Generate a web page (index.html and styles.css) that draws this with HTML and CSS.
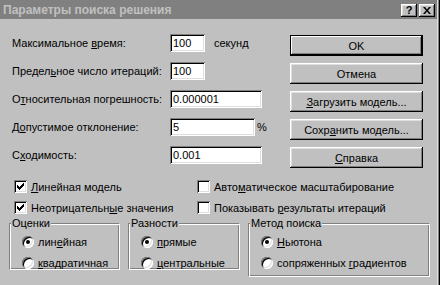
FILE: index.html
```html
<!DOCTYPE html>
<html lang="ru">
<head>
<meta charset="utf-8">
<title>Параметры поиска решения</title>
<link rel="stylesheet" href="styles.css">
</head>
<body>
<div class="window">
  <div class="titlebar">
    <span class="title">Параметры поиска решения</span>
    <div class="caption-btns">
      <span class="cbtn cbtn-help">?</span>
      <span class="cbtn">
        <svg width="8" height="7" viewBox="0 0 8 7"><path d="M0 0h2l2 2.5 2-2.5h2L5 3.5 8 7H6L4 4.5 2 7H0l3-3.5z" fill="#000"/></svg>
      </span>
    </div>
  </div>

  <div class="main">
    <div class="form">
      <span class="label">Максимальное <u>в</u>ремя:</span>
      <span class="field"><input class="input w-short" value="100"><span class="unit">секунд</span></span>

      <span class="label">Предел<u>ь</u>ное число итераций:</span>
      <span class="field"><input class="input w-short" value="100"></span>

      <span class="label">О<u>т</u>носительная погрешность:</span>
      <span class="field"><input class="input w-long" value="0.000001"></span>

      <span class="label">Д<u>о</u>пустимое отклонение:</span>
      <span class="field"><input class="input w-mid" value="5"><span class="unit-pct">%</span></span>

      <span class="label">С<u>х</u>одимость:</span>
      <span class="field"><input class="input w-long" value="0.001"></span>
    </div>

    <div class="buttons">
      <button class="btn btn-default">OK</button>
      <button class="btn">Отмена</button>
      <button class="btn"><u>З</u>агрузить модель...</button>
      <button class="btn">Сохр<u>а</u>нить модель...</button>
      <button class="btn"><u>С</u>правка</button>
    </div>
  </div>

  <div class="options">
    <label class="check"><span class="box"><svg width="7" height="7" viewBox="0 0 7 7"><path d="M0 2h1v1h1v1h1V3h1V2h1V1h1V0h1v3H6v1H5v1H4v1H3v1H2V6H1V5H0z" fill="#000"/></svg></span><span><u>Л</u>инейная модель</span></label>
    <label class="check"><span class="box"></span><span>Авто<u>м</u>атическое масштабирование</span></label>
    <label class="check"><span class="box"><svg width="7" height="7" viewBox="0 0 7 7"><path d="M0 2h1v1h1v1h1V3h1V2h1V1h1V0h1v3H6v1H5v1H4v1H3v1H2V6H1V5H0z" fill="#000"/></svg></span><span>Неотрицательн<u>ы</u>е значения</span></label>
    <label class="check"><span class="box"></span><span>Показывать <u>р</u>езультаты итераций</span></label>
  </div>

  <div class="groups">
    <fieldset class="group group-est">
      <legend>Оценки</legend>
      <div class="radios">
        <span class="radio-row"><span class="radio on"></span><span>лин<u>е</u>йная</span></span>
        <span class="radio-row"><span class="radio"></span><span><u>к</u>вадратичная</span></span>
      </div>
    </fieldset>
    <fieldset class="group group-diff">
      <legend>Разности</legend>
      <div class="radios">
        <span class="radio-row"><span class="radio on"></span><span><u>п</u>рямые</span></span>
        <span class="radio-row"><span class="radio"></span><span><u>ц</u>ентральные</span></span>
      </div>
    </fieldset>
    <fieldset class="group group-method">
      <legend>Метод поиска</legend>
      <div class="radios">
        <span class="radio-row"><span class="radio on"></span><span><u>Н</u>ьютона</span></span>
        <span class="radio-row"><span class="radio"></span><span>сопряженных <u>г</u>радиентов</span></span>
      </div>
    </fieldset>
  </div>
</div>
</body>
</html>
```
FILE: styles.css
```css
* { box-sizing: border-box; }
html, body { margin: 0; padding: 0; }
body {
  width: 440px;
  height: 285px;
  overflow: hidden;
  background: #c0c0c0;
  font-family: "Liberation Sans", Arial, sans-serif;
  font-size: 11px;
  color: #000;
}
u { text-decoration: underline; text-underline-offset: 1px; }

.window {
  width: 440px;
  height: 285px;
  padding-right: 3px;
  background: #c0c0c0;
  box-shadow: inset -1px 0 #000, inset -2px 0 #808080, inset -3px 0 #dfdfdf;
}

.titlebar {
  height: 19px;
  background: #808080;
  display: flex;
  align-items: center;
  justify-content: space-between;
  padding: 0 2px 0 3px;
}
.title {
  color: #c0c0c0;
  font-weight: bold;
  font-size: 12px;
  white-space: nowrap;
}
.caption-btns {
  display: flex;
  gap: 2px;
  align-self: flex-start;
  margin-top: 4px;
}
.cbtn {
  width: 16px;
  height: 13px;
  background: #c0c0c0;
  box-shadow: inset -1px -1px #000, inset 1px 1px #fff, inset -2px -2px #808080, inset 2px 2px #dfdfdf;
  display: flex;
  align-items: center;
  justify-content: center;
  font-weight: bold;
  font-size: 11px;
  line-height: 1;
}

.main {
  display: flex;
  padding: 15px 0 0 12px;
}
.form {
  width: 278px;
  display: grid;
  grid-template-columns: 158px auto;
  grid-auto-rows: 28px;
  align-items: start;
}
.label {
  line-height: 18px;
  white-space: nowrap;
}
.field {
  display: flex;
  align-items: center;
  height: 18px;
}
.input {
  height: 18px;
  margin: 0;
  border: none;
  outline: none;
  padding: 0 1px 0 3px;
  font: inherit;
  color: #000;
  background: #fff;
  box-shadow: inset 1px 1px #808080, inset -1px -1px #fff, inset 2px 2px #000, inset -2px -2px #dfdfdf;
}
.w-short { width: 35px; }
.w-mid { width: 85px; }
.w-long { width: 92px; }
.unit { margin-left: 9px; }
.unit-pct { margin-left: 2px; }

.buttons {
  display: flex;
  flex-direction: column;
  gap: 7px;
  margin-top: 1px;
  width: 133px;
}
.btn {
  height: 21px;
  margin: 0;
  padding: 0;
  border: none;
  font: inherit;
  color: #000;
  background: #c0c0c0;
  box-shadow: inset -1px -1px #000, inset 1px 1px #fff, inset -2px -2px #808080, inset 2px 2px #dfdfdf;
}
.btn-default {
  box-shadow: inset 0 0 0 1px #000, inset -2px -2px #000, inset 2px 2px #fff, inset -3px -3px #808080;
}

.options {
  display: grid;
  grid-template-columns: 183px auto;
  row-gap: 8px;
  padding: 6px 0 0 14px;
}
.check {
  display: flex;
  align-items: center;
  gap: 4px;
  height: 13px;
  white-space: nowrap;
}
.box {
  flex: none;
  width: 13px;
  height: 13px;
  background: #fff;
  box-shadow: inset 1px 1px #808080, inset -1px -1px #fff, inset 2px 2px #000, inset -2px -2px #dfdfdf;
  display: flex;
  align-items: center;
  justify-content: center;
}

.groups {
  display: flex;
  align-items: flex-start;
  gap: 8px;
  padding-left: 9px;
  margin-top: 3px;
}
.group {
  margin: 0;
  padding: 0;
  min-width: 0;
  border: 1px solid;
  border-color: #808080 #fff #fff #808080;
  box-shadow: inset 1px 1px #fff, inset -1px -1px #808080;
}
.group legend {
  margin-left: 1px;
  padding: 0 1px;
  line-height: 13px;
  background: #c0c0c0;
}
.group-est { width: 111px; height: 53px; }
.group-diff { width: 112px; height: 53px; }
.group-method { width: 182px; height: 60px; }

.radios {
  display: flex;
  flex-direction: column;
  gap: 9px;
  padding: 6px 0 0 12px;
}
.radio-row {
  display: flex;
  align-items: center;
  gap: 4px;
  height: 12px;
  white-space: nowrap;
}
.radio {
  flex: none;
  width: 12px;
  height: 12px;
  border-radius: 50%;
  background: #fff;
  box-shadow: inset 1px 1px #808080, inset -1px -1px #fff, inset 2px 2px #000, inset -2px -2px #dfdfdf;
  display: flex;
  align-items: center;
  justify-content: center;
}
.radio.on::after {
  content: "";
  width: 4px;
  height: 4px;
  border-radius: 50%;
  background: #000;
}
```
